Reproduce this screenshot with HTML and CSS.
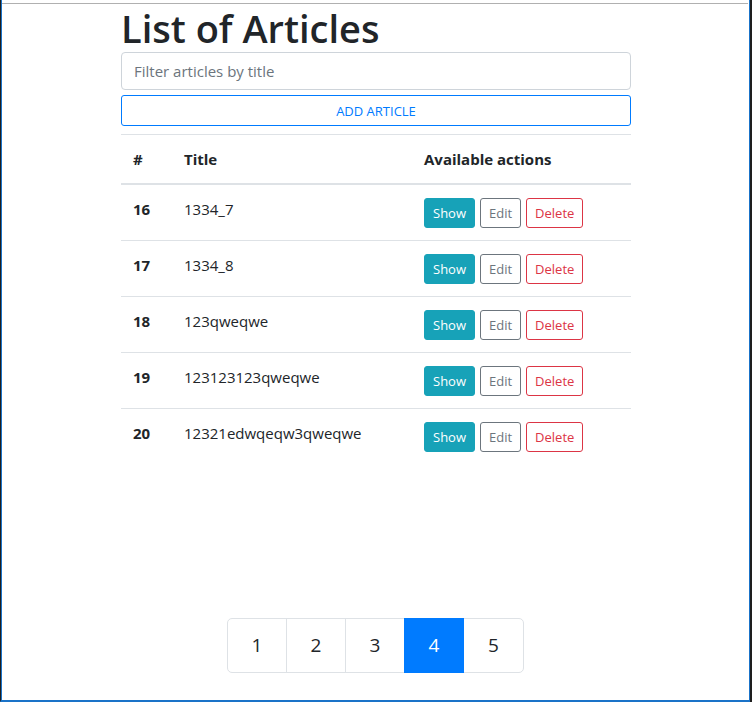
FILE: index.html
```html
<!DOCTYPE html>
<html>
<head>
<meta charset="utf-8">
<link rel="stylesheet" href="styles.css">
</head>
<body>
<div class="window">
  <div class="topline"></div>
  <div class="page">
    <div class="content">
      <h1 class="title">List of Articles</h1>
      <input class="filter" type="text" placeholder="Filter articles by title">
      <button class="add-btn">ADD ARTICLE</button>
      <table class="articles">
        <thead>
          <tr><th class="c-num">#</th><th class="c-title">Title</th><th class="c-act">Available actions</th></tr>
        </thead>
        <tbody>
          <tr><td class="num">16</td><td>1334_7</td><td><div class="actions"><button class="btn show">Show</button><button class="btn edit">Edit</button><button class="btn del">Delete</button></div></td></tr>
          <tr><td class="num">17</td><td>1334_8</td><td><div class="actions"><button class="btn show">Show</button><button class="btn edit">Edit</button><button class="btn del">Delete</button></div></td></tr>
          <tr><td class="num">18</td><td>123qweqwe</td><td><div class="actions"><button class="btn show">Show</button><button class="btn edit">Edit</button><button class="btn del">Delete</button></div></td></tr>
          <tr><td class="num">19</td><td>123123123qweqwe</td><td><div class="actions"><button class="btn show">Show</button><button class="btn edit">Edit</button><button class="btn del">Delete</button></div></td></tr>
          <tr><td class="num">20</td><td>12321edwqeqw3qweqwe</td><td><div class="actions"><button class="btn show">Show</button><button class="btn edit">Edit</button><button class="btn del">Delete</button></div></td></tr>
        </tbody>
      </table>
    </div>
    <ul class="pagination">
      <li class="page-item"><a class="page-link">1</a></li>
      <li class="page-item"><a class="page-link">2</a></li>
      <li class="page-item"><a class="page-link">3</a></li>
      <li class="page-item active"><a class="page-link">4</a></li>
      <li class="page-item"><a class="page-link">5</a></li>
    </ul>
  </div>
</div>
</body>
</html>
```

FILE: styles.css
```css
html, body {
  margin: 0;
  padding: 0;
  background: #1e1e1e;
}
body {
  width: 752px;
  height: 702px;
  overflow: hidden;
  font-family: "Open Sans", "Noto Sans", sans-serif;
  color: #212529;
}
.window {
  box-sizing: border-box;
  margin: 0 2px 0 0;
  height: 702px;
  background: #fff;
  border-left: 1px solid #1e1e1e;
  border-right: 1px solid #1a73c8;
  border-bottom: 2px solid #1a73c8;
  box-shadow: inset 1px 0 0 #1a73c8;
  display: flex;
  flex-direction: column;
}
.topline {
  margin: 3px 1px 0 1px;
  height: 1px;
  background: #b0b0b0;
}
.page {
  flex: 1;
  display: flex;
  flex-direction: column;
  align-items: flex-start;
}
.content {
  width: 510px;
  margin-left: 120px;
  display: flex;
  flex-direction: column;
}
.title {
  margin: 0;
  font-size: 38px;
  line-height: 48px;
  font-weight: 600;
  color: #212529;
  letter-spacing: 0;
}
.filter {
  box-sizing: border-box;
  height: 38px;
  width: 100%;
  border: 1px solid #ced4da;
  border-radius: 4px;
  padding: 6px 12px;
  font-family: inherit;
  font-size: 15px;
  color: #495057;
  outline: none;
  margin: 0;
}
.filter::placeholder {
  color: #6c757d;
}
.add-btn {
  box-sizing: border-box;
  margin: 5px 0 0 0;
  height: 31px;
  width: 100%;
  background: #fff;
  border: 1px solid #007bff;
  border-radius: 3px;
  color: #007bff;
  font-family: inherit;
  font-size: 13px;
  padding: 0;
}
.articles {
  margin-top: 8px;
  width: 100%;
  border-collapse: collapse;
  font-size: 15px;
}
.articles th, .articles td {
  padding: 12px;
  text-align: left;
  vertical-align: top;
  line-height: 24px;
  border-top: 1px solid #dee2e6;
}
.articles th {
  font-weight: 700;
  vertical-align: bottom;
}
.articles thead tr th {
  border-bottom: 2px solid #dee2e6;
}
.articles tbody tr:first-child td {
  border-top: none;
}
.c-num { width: 27px; }
.c-title { width: 216px; }
.num { font-weight: 700; }
.actions {
  display: flex;
  gap: 5px;
  padding-top: 1px;
}
.btn {
  box-sizing: border-box;
  height: 30px;
  padding: 0 8px;
  font-family: inherit;
  font-size: 13px;
  border-radius: 3px;
  background: #fff;
  border: 1px solid;
}
.show {
  background: #17a2b8;
  border-color: #17a2b8;
  color: #fff;
}
.edit {
  border-color: #6c757d;
  color: #6c757d;
}
.del {
  border-color: #dc3545;
  color: #dc3545;
}
.pagination {
  list-style: none;
  margin: auto 0 27px 226px;
  padding: 0;
  display: flex;
}
.page-item .page-link {
  box-sizing: border-box;
  display: block;
  height: 55px;
  width: 60px;
  line-height: 53px;
  text-align: center;
  font-size: 19px;
  color: #212529;
  border: 1px solid #dee2e6;
  margin-left: -1px;
  background: #fff;
}
.page-item:first-child .page-link {
  margin-left: 0;
  border-radius: 5px 0 0 5px;
}
.page-item:last-child .page-link {
  border-radius: 0 5px 5px 0;
  width: 61px;
}
.page-item.active .page-link {
  background: #007bff;
  border-color: #007bff;
  color: #fff;
  position: relative;
}
```
